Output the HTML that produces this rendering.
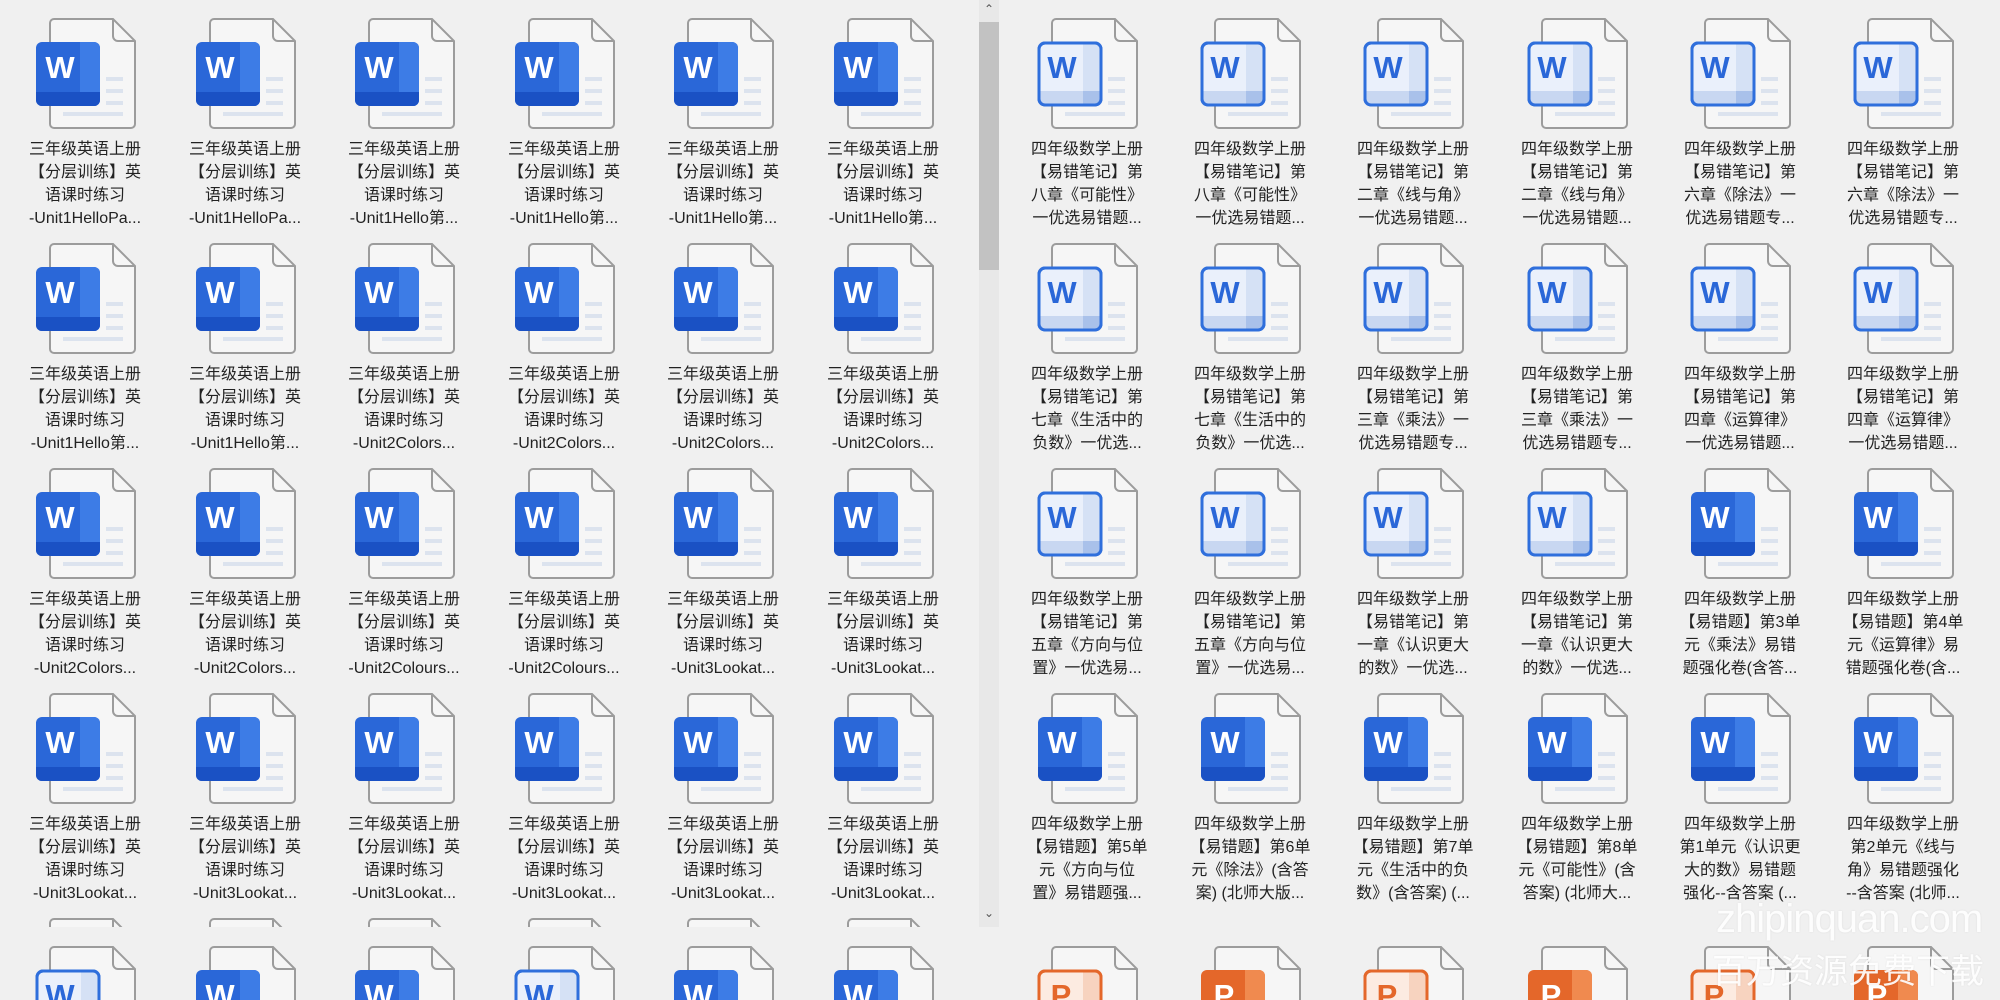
<!DOCTYPE html>
<html><head><meta charset="utf-8">
<style>
html,body{margin:0;padding:0;width:2000px;height:1000px;overflow:hidden;background:#f0f0f0;font-family:"Liberation Sans","Noto Sans CJK SC",sans-serif;}
#root{position:relative;width:2000px;height:1000px;overflow:hidden;}
.lp{position:absolute;left:0;top:0;width:978px;height:927px;overflow:hidden;}
.c{position:absolute;width:160px;height:225px;}
.c.b{height:54px;overflow:hidden;}
.c.f{height:9px;overflow:hidden;}
.c svg{position:absolute;left:0;top:0;width:160px;height:115px;}
.c .t{position:absolute;left:0;top:120px;width:160px;text-align:center;font-size:16px;line-height:23px;color:#222;white-space:nowrap;}
.sb{position:absolute;left:979px;top:0;width:20px;height:927px;background:#e8e8e8;}
.th{position:absolute;left:0;top:22px;width:20px;height:248px;background:#c2c2c2;}
.ar{position:absolute;left:0;width:20px;text-align:center;font-size:12px;color:#555;}
.wm{position:absolute;white-space:nowrap;color:rgba(255,255,255,0.92);font-family:"Liberation Sans","Noto Sans CJK SC",sans-serif;text-shadow:0 0 2px rgba(0,0,0,0.08);}
</style></head><body><div id="root">
<svg width="0" height="0" style="position:absolute">
<defs>
<g id="page">
<path d="M49,1 H108 L130,23 V106 a4,4 0 0 1 -4,4 H49 a4,4 0 0 1 -4,-4 V5 a4,4 0 0 1 4,-4 Z" fill="#f6f6f6" stroke="#9c9c9c" stroke-width="2"/>
<path d="M108,1 V18 a5,5 0 0 0 5,5 H130" fill="none" stroke="#9c9c9c" stroke-width="2"/>
<rect x="101" y="59" width="17" height="4" fill="#dce3ee"/>
<rect x="101" y="71" width="17" height="4" fill="#dce3ee"/>
<rect x="101" y="83" width="17" height="4" fill="#dce3ee"/>
<rect x="58" y="94" width="60" height="4" fill="#dce3ee"/>
</g>
<symbol id="wf" viewBox="0 0 160 115">
<use href="#page"/>
<rect x="31" y="24" width="64" height="64" rx="6" fill="#2a67d8"/>
<path d="M75,24 H89 a6,6 0 0 1 6,6 V82 a6,6 0 0 1 -6,6 H75 Z" fill="#3d7ce6"/>
<path d="M31,74 H95 V82 a6,6 0 0 1 -6,6 H37 a6,6 0 0 1 -6,-6 Z" fill="#1a51c4"/>
<text x="55" y="60" font-family="Liberation Sans" font-weight="bold" font-size="31" fill="#fff" text-anchor="middle">W</text>
</symbol>
<symbol id="wo" viewBox="0 0 160 115">
<use href="#page"/>
<rect x="32" y="25" width="62" height="62" rx="6" fill="#eaf0fb" stroke="#2f6fdc" stroke-width="3"/>
<rect x="76" y="26.5" width="16.5" height="59" fill="#d5e1f5"/>
<rect x="33.5" y="73" width="59" height="12.5" fill="#c8d7f1"/>
<rect x="76" y="73" width="16.5" height="12.5" fill="#a9c1ea"/>
<rect x="32" y="25" width="62" height="62" rx="6" fill="none" stroke="#2f6fdc" stroke-width="3"/>
<text x="55" y="60" font-family="Liberation Sans" font-weight="bold" font-size="31" fill="#2a67d8" text-anchor="middle">W</text>
</symbol>
<symbol id="pf" viewBox="0 0 160 115">
<use href="#page"/>
<rect x="31" y="24" width="64" height="64" rx="6" fill="#e4672a"/>
<path d="M75,24 H89 a6,6 0 0 1 6,6 V82 a6,6 0 0 1 -6,6 H75 Z" fill="#f08a4f"/>
<text x="54" y="60" font-family="Liberation Sans" font-weight="bold" font-size="31" fill="#fff" text-anchor="middle">P</text>
</symbol>
<symbol id="po" viewBox="0 0 160 115">
<use href="#page"/>
<rect x="32" y="25" width="62" height="62" rx="6" fill="#fcebe1" stroke="#e4672a" stroke-width="3"/>
<rect x="76" y="26.5" width="16.5" height="59" fill="#f7d3bf"/>
<rect x="32" y="25" width="62" height="62" rx="6" fill="none" stroke="#e4672a" stroke-width="3"/>
<text x="54" y="60" font-family="Liberation Sans" font-weight="bold" font-size="31" fill="#e4672a" text-anchor="middle">P</text>
</symbol>
</defs></svg>

<div class="lp">
<div class="c" style="left:5px;top:18px"><svg><use href="#wf"/></svg><div class="t">三年级英语上册<br>【分层训练】英<br>语课时练习<br>-Unit1HelloPa...</div></div>
<div class="c" style="left:165px;top:18px"><svg><use href="#wf"/></svg><div class="t">三年级英语上册<br>【分层训练】英<br>语课时练习<br>-Unit1HelloPa...</div></div>
<div class="c" style="left:324px;top:18px"><svg><use href="#wf"/></svg><div class="t">三年级英语上册<br>【分层训练】英<br>语课时练习<br>-Unit1Hello第...</div></div>
<div class="c" style="left:484px;top:18px"><svg><use href="#wf"/></svg><div class="t">三年级英语上册<br>【分层训练】英<br>语课时练习<br>-Unit1Hello第...</div></div>
<div class="c" style="left:643px;top:18px"><svg><use href="#wf"/></svg><div class="t">三年级英语上册<br>【分层训练】英<br>语课时练习<br>-Unit1Hello第...</div></div>
<div class="c" style="left:803px;top:18px"><svg><use href="#wf"/></svg><div class="t">三年级英语上册<br>【分层训练】英<br>语课时练习<br>-Unit1Hello第...</div></div>
<div class="c" style="left:5px;top:243px"><svg><use href="#wf"/></svg><div class="t">三年级英语上册<br>【分层训练】英<br>语课时练习<br>-Unit1Hello第...</div></div>
<div class="c" style="left:165px;top:243px"><svg><use href="#wf"/></svg><div class="t">三年级英语上册<br>【分层训练】英<br>语课时练习<br>-Unit1Hello第...</div></div>
<div class="c" style="left:324px;top:243px"><svg><use href="#wf"/></svg><div class="t">三年级英语上册<br>【分层训练】英<br>语课时练习<br>-Unit2Colors...</div></div>
<div class="c" style="left:484px;top:243px"><svg><use href="#wf"/></svg><div class="t">三年级英语上册<br>【分层训练】英<br>语课时练习<br>-Unit2Colors...</div></div>
<div class="c" style="left:643px;top:243px"><svg><use href="#wf"/></svg><div class="t">三年级英语上册<br>【分层训练】英<br>语课时练习<br>-Unit2Colors...</div></div>
<div class="c" style="left:803px;top:243px"><svg><use href="#wf"/></svg><div class="t">三年级英语上册<br>【分层训练】英<br>语课时练习<br>-Unit2Colors...</div></div>
<div class="c" style="left:5px;top:468px"><svg><use href="#wf"/></svg><div class="t">三年级英语上册<br>【分层训练】英<br>语课时练习<br>-Unit2Colors...</div></div>
<div class="c" style="left:165px;top:468px"><svg><use href="#wf"/></svg><div class="t">三年级英语上册<br>【分层训练】英<br>语课时练习<br>-Unit2Colors...</div></div>
<div class="c" style="left:324px;top:468px"><svg><use href="#wf"/></svg><div class="t">三年级英语上册<br>【分层训练】英<br>语课时练习<br>-Unit2Colours...</div></div>
<div class="c" style="left:484px;top:468px"><svg><use href="#wf"/></svg><div class="t">三年级英语上册<br>【分层训练】英<br>语课时练习<br>-Unit2Colours...</div></div>
<div class="c" style="left:643px;top:468px"><svg><use href="#wf"/></svg><div class="t">三年级英语上册<br>【分层训练】英<br>语课时练习<br>-Unit3Lookat...</div></div>
<div class="c" style="left:803px;top:468px"><svg><use href="#wf"/></svg><div class="t">三年级英语上册<br>【分层训练】英<br>语课时练习<br>-Unit3Lookat...</div></div>
<div class="c" style="left:5px;top:693px"><svg><use href="#wf"/></svg><div class="t">三年级英语上册<br>【分层训练】英<br>语课时练习<br>-Unit3Lookat...</div></div>
<div class="c" style="left:165px;top:693px"><svg><use href="#wf"/></svg><div class="t">三年级英语上册<br>【分层训练】英<br>语课时练习<br>-Unit3Lookat...</div></div>
<div class="c" style="left:324px;top:693px"><svg><use href="#wf"/></svg><div class="t">三年级英语上册<br>【分层训练】英<br>语课时练习<br>-Unit3Lookat...</div></div>
<div class="c" style="left:484px;top:693px"><svg><use href="#wf"/></svg><div class="t">三年级英语上册<br>【分层训练】英<br>语课时练习<br>-Unit3Lookat...</div></div>
<div class="c" style="left:643px;top:693px"><svg><use href="#wf"/></svg><div class="t">三年级英语上册<br>【分层训练】英<br>语课时练习<br>-Unit3Lookat...</div></div>
<div class="c" style="left:803px;top:693px"><svg><use href="#wf"/></svg><div class="t">三年级英语上册<br>【分层训练】英<br>语课时练习<br>-Unit3Lookat...</div></div>
<div class="c f" style="left:5px;top:918px"><svg><use href="#wf"/></svg></div>
<div class="c f" style="left:165px;top:918px"><svg><use href="#wf"/></svg></div>
<div class="c f" style="left:324px;top:918px"><svg><use href="#wf"/></svg></div>
<div class="c f" style="left:484px;top:918px"><svg><use href="#wf"/></svg></div>
<div class="c f" style="left:643px;top:918px"><svg><use href="#wf"/></svg></div>
<div class="c f" style="left:803px;top:918px"><svg><use href="#wf"/></svg></div>
</div>
<div class="c b" style="left:5px;top:946px"><svg><use href="#wo"/></svg></div>
<div class="c b" style="left:165px;top:946px"><svg><use href="#wf"/></svg></div>
<div class="c b" style="left:324px;top:946px"><svg><use href="#wf"/></svg></div>
<div class="c b" style="left:484px;top:946px"><svg><use href="#wo"/></svg></div>
<div class="c b" style="left:643px;top:946px"><svg><use href="#wf"/></svg></div>
<div class="c b" style="left:803px;top:946px"><svg><use href="#wf"/></svg></div>

<div class="sb"><div class="ar" style="top:2px">&#8963;</div><div class="th"></div><div class="ar" style="top:906px">&#8964;</div></div>

<div class="c" style="left:1007px;top:18px"><svg><use href="#wo"/></svg><div class="t">四年级数学上册<br>【易错笔记】第<br>八章《可能性》<br>一优选易错题...</div></div>
<div class="c" style="left:1170px;top:18px"><svg><use href="#wo"/></svg><div class="t">四年级数学上册<br>【易错笔记】第<br>八章《可能性》<br>一优选易错题...</div></div>
<div class="c" style="left:1333px;top:18px"><svg><use href="#wo"/></svg><div class="t">四年级数学上册<br>【易错笔记】第<br>二章《线与角》<br>一优选易错题...</div></div>
<div class="c" style="left:1497px;top:18px"><svg><use href="#wo"/></svg><div class="t">四年级数学上册<br>【易错笔记】第<br>二章《线与角》<br>一优选易错题...</div></div>
<div class="c" style="left:1660px;top:18px"><svg><use href="#wo"/></svg><div class="t">四年级数学上册<br>【易错笔记】第<br>六章《除法》一<br>优选易错题专...</div></div>
<div class="c" style="left:1823px;top:18px"><svg><use href="#wo"/></svg><div class="t">四年级数学上册<br>【易错笔记】第<br>六章《除法》一<br>优选易错题专...</div></div>
<div class="c" style="left:1007px;top:243px"><svg><use href="#wo"/></svg><div class="t">四年级数学上册<br>【易错笔记】第<br>七章《生活中的<br>负数》一优选...</div></div>
<div class="c" style="left:1170px;top:243px"><svg><use href="#wo"/></svg><div class="t">四年级数学上册<br>【易错笔记】第<br>七章《生活中的<br>负数》一优选...</div></div>
<div class="c" style="left:1333px;top:243px"><svg><use href="#wo"/></svg><div class="t">四年级数学上册<br>【易错笔记】第<br>三章《乘法》一<br>优选易错题专...</div></div>
<div class="c" style="left:1497px;top:243px"><svg><use href="#wo"/></svg><div class="t">四年级数学上册<br>【易错笔记】第<br>三章《乘法》一<br>优选易错题专...</div></div>
<div class="c" style="left:1660px;top:243px"><svg><use href="#wo"/></svg><div class="t">四年级数学上册<br>【易错笔记】第<br>四章《运算律》<br>一优选易错题...</div></div>
<div class="c" style="left:1823px;top:243px"><svg><use href="#wo"/></svg><div class="t">四年级数学上册<br>【易错笔记】第<br>四章《运算律》<br>一优选易错题...</div></div>
<div class="c" style="left:1007px;top:468px"><svg><use href="#wo"/></svg><div class="t">四年级数学上册<br>【易错笔记】第<br>五章《方向与位<br>置》一优选易...</div></div>
<div class="c" style="left:1170px;top:468px"><svg><use href="#wo"/></svg><div class="t">四年级数学上册<br>【易错笔记】第<br>五章《方向与位<br>置》一优选易...</div></div>
<div class="c" style="left:1333px;top:468px"><svg><use href="#wo"/></svg><div class="t">四年级数学上册<br>【易错笔记】第<br>一章《认识更大<br>的数》一优选...</div></div>
<div class="c" style="left:1497px;top:468px"><svg><use href="#wo"/></svg><div class="t">四年级数学上册<br>【易错笔记】第<br>一章《认识更大<br>的数》一优选...</div></div>
<div class="c" style="left:1660px;top:468px"><svg><use href="#wf"/></svg><div class="t">四年级数学上册<br>【易错题】第3单<br>元《乘法》易错<br>题强化卷(含答...</div></div>
<div class="c" style="left:1823px;top:468px"><svg><use href="#wf"/></svg><div class="t">四年级数学上册<br>【易错题】第4单<br>元《运算律》易<br>错题强化卷(含...</div></div>
<div class="c" style="left:1007px;top:693px"><svg><use href="#wf"/></svg><div class="t">四年级数学上册<br>【易错题】第5单<br>元《方向与位<br>置》易错题强...</div></div>
<div class="c" style="left:1170px;top:693px"><svg><use href="#wf"/></svg><div class="t">四年级数学上册<br>【易错题】第6单<br>元《除法》(含答<br>案) (北师大版...</div></div>
<div class="c" style="left:1333px;top:693px"><svg><use href="#wf"/></svg><div class="t">四年级数学上册<br>【易错题】第7单<br>元《生活中的负<br>数》(含答案) (...</div></div>
<div class="c" style="left:1497px;top:693px"><svg><use href="#wf"/></svg><div class="t">四年级数学上册<br>【易错题】第8单<br>元《可能性》(含<br>答案) (北师大...</div></div>
<div class="c" style="left:1660px;top:693px"><svg><use href="#wf"/></svg><div class="t">四年级数学上册<br>第1单元《认识更<br>大的数》易错题<br>强化--含答案 (...</div></div>
<div class="c" style="left:1823px;top:693px"><svg><use href="#wf"/></svg><div class="t">四年级数学上册<br>第2单元《线与<br>角》易错题强化<br>--含答案 (北师...</div></div>
<div class="c b" style="left:1007px;top:946px"><svg><use href="#po"/></svg></div>
<div class="c b" style="left:1170px;top:946px"><svg><use href="#pf"/></svg></div>
<div class="c b" style="left:1333px;top:946px"><svg><use href="#po"/></svg></div>
<div class="c b" style="left:1497px;top:946px"><svg><use href="#pf"/></svg></div>
<div class="c b" style="left:1660px;top:946px"><svg><use href="#po"/></svg></div>
<div class="c b" style="left:1823px;top:946px"><svg><use href="#pf"/></svg></div>

<div class="wm" style="left:1716px;top:896px;font-size:40px;letter-spacing:-1px;line-height:46px;">zhipinquan.com</div>
<div class="wm" style="left:1712px;top:950px;font-size:34px;line-height:44px;">百万资源免费下载</div>
</div></body></html>
